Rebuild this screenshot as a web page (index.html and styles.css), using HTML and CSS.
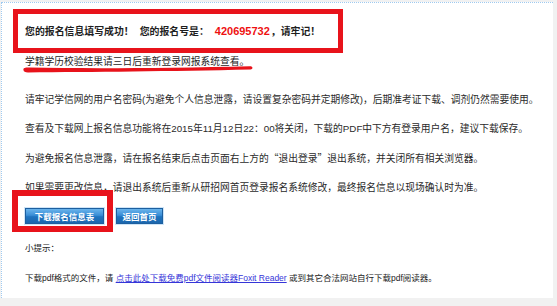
FILE: index.html
```html
<!DOCTYPE html>
<html lang="zh-CN">
<head>
<meta charset="utf-8">
<title>报名成功</title>
<link rel="stylesheet" href="styles.css">
</head>
<body>
<div class="panel">
  <div class="content">
    <div class="notice-box">
      <span class="notice-a">您的报名信息填写成功！</span><span class="notice-b">您的报名号是：</span><span class="num">420695732</span><span class="notice-c">，请牢记！</span>
    </div>
    <div class="check-line">
      <svg class="stroke" width="234" height="10" viewBox="0 0 234 10"><path d="M2.5 6.2 C 2 4, 4 3.6, 8 3.6 C 70 4.6, 150 4.2, 229 2.2 C 232 2.2, 232.5 5, 229.5 5.6 C 150 7.4, 70 8.2, 7 8.4 C 4 8.4, 2.8 7.6, 2.5 6.2 Z" fill="#e8131b"/></svg>
      <span class="check-text">学籍学历校验结果请三日后重新登录网报系统查看。</span>
    </div>
    <p class="para">请牢记学信网的用户名密码(为避免个人信息泄露，请设置复杂密码并定期修改)，后期准考证下载、调剂仍然需要使用。</p>
    <p class="para">查看及下载网上报名信息功能将在2015年11月12日22：00将关闭，下载的PDF中下方有登录用户名，建议下载保存。</p>
    <p class="para">为避免报名信息泄露，请在报名结束后点击页面右上方的<span class="cjk">“退出登录”</span>退出系统，并关闭所有相关浏览器。</p>
    <p class="para">如果需要更改信息，请退出系统后重新从研招网首页登录报名系统修改，最终报名信息以现场确认时为准。</p>
    <div class="btn-row">
      <div class="btn-box"><button class="btn btn-wide" type="button">下载报名信息表</button></div>
      <button class="btn btn-narrow" type="button">返回首页</button>
    </div>
    <div class="tip">小提示：</div>
    <div class="tip-line">下载pdf格式的文件，请 <a class="link" href="#">点击此处下载免费pdf文件阅读器Foxit Reader</a> 或到其它合法网站自行下载pdf阅读器。</div>
  </div>
</div>
</body>
</html>
```
FILE: styles.css
```css
html, body {
  margin: 0;
  padding: 0;
}
body {
  background: #f1f1f1;
  width: 557px;
  height: 306px;
  overflow: hidden;
  font-family: "Liberation Sans", "Noto Sans CJK SC", sans-serif;
  color: #2a2a2a;
}
.panel {
  box-sizing: border-box;
  margin: 2px 0 0 1px;
  width: 552px;
  height: 296px;
  background: #fff;
  border-top: 1px dotted #9fcaf0;
  border-left: 1px dotted #9fcaf0;
}
.content {
  padding-left: 23px;
}
.notice-box {
  box-sizing: border-box;
  margin: 6px 0 0 -12px;
  width: 330px;
  height: 44px;
  border: 5px solid #e8131b;
  padding-left: 7px;
  line-height: 34px;
  font-size: 9.9px;
  font-weight: bold;
  color: #1e1e1e;
  white-space: nowrap;
}
.notice-b {
  margin-left: 6px;
}
.num {
  margin: 0 1px 0 6px;
  color: #ee1111;
  font-size: 11px;
}
.check-line {
  position: relative;
  margin-top: 2px;
  line-height: 14px;
  font-size: 9.75px;
  color: #1e1e1e;
  white-space: nowrap;
}
.stroke {
  position: absolute;
  left: -4px;
  top: 9px;
}
.check-text {
  position: relative;
}
.cjk {
  font-family: "Noto Sans CJK SC", sans-serif;
}
.para {
  margin: 15px 0 0;
  line-height: 14px;
  font-size: 9.75px;
  white-space: nowrap;
}
.para:first-of-type {
  margin-top: 24px;
}
.btn-row {
  display: flex;
  align-items: flex-start;
  margin-top: -5px;
}
.btn-box {
  margin-left: -13px;
  border: 6px solid #e8131b;
  padding: 12px 3px 2px 7px;
}
.btn {
  display: block;
  box-sizing: border-box;
  height: 16px;
  margin: 0;
  padding: 0;
  border: 1px solid #1d5f9f;
  box-shadow: 0 0 0 1px #cfe5f7;
  background: linear-gradient(#6ab4ec 0%, #3a8ed6 45%, #1f74c0 55%, #1b66ad 100%);
  color: #fff;
  font-family: "Noto Sans CJK SC", sans-serif;
  font-weight: bold;
  font-size: 8.5px;
  line-height: 14px;
  text-align: center;
}
.btn-wide {
  width: 79px;
}
.btn-narrow {
  width: 47px;
  margin: 18px 0 0 3px;
}
.tip {
  margin-top: 10px;
  line-height: 12px;
  font-size: 8.5px;
  color: #222;
}
.tip-line {
  margin-top: 18px;
  line-height: 12px;
  font-size: 8.5px;
  color: #222;
  white-space: nowrap;
}
.link {
  color: #3535d8;
  text-decoration: underline;
}
```
